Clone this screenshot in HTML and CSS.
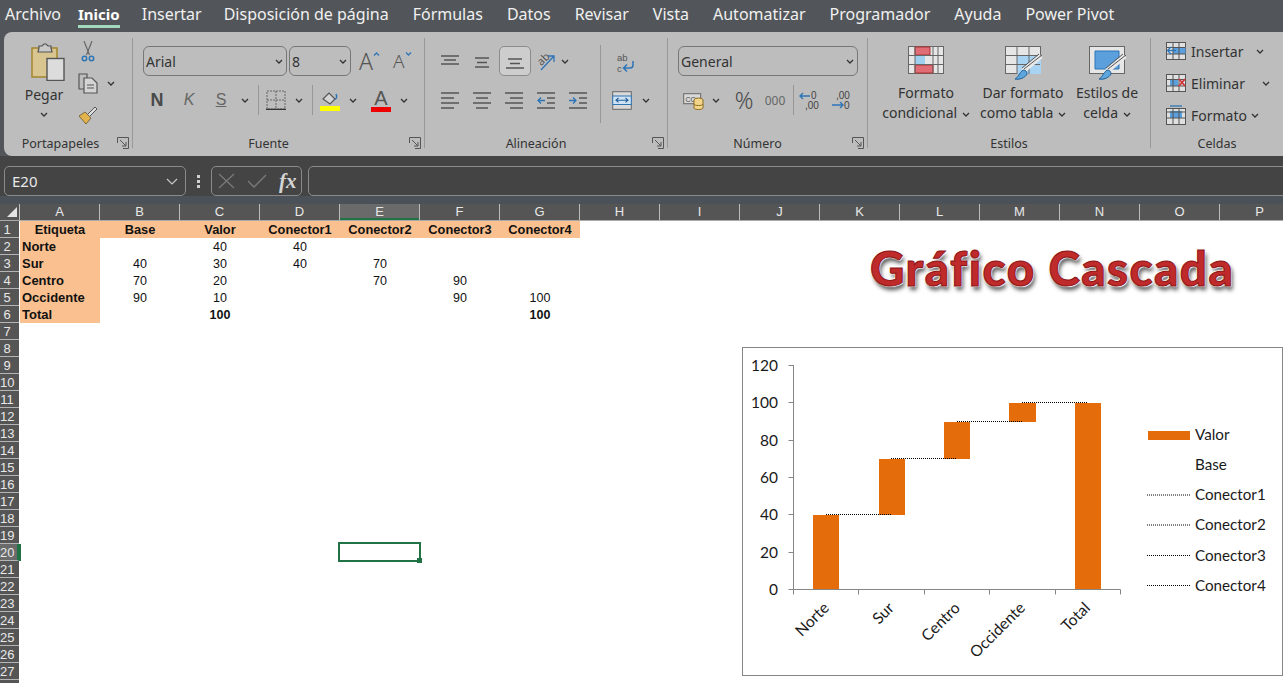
FILE: index.html
```html
<!DOCTYPE html>
<html lang="es">
<head>
    <meta charset="UTF-8">
    <title>Gráfico Cascada - Excel</title>
    <link rel="stylesheet" href="styles.css">
</head>
<body>
    <nav class="menu">
        <span>Archivo</span>
        <span class="active">Inicio</span>
        <span class="tight">Insertar</span>
        <span>Disposición de página</span>
        <span>Fórmulas</span>
        <span>Datos</span>
        <span>Revisar</span>
        <span>Vista</span>
        <span>Automatizar</span>
        <span>Programador</span>
        <span>Ayuda</span>
        <span>Power Pivot</span>
    </nav>

    <div class="ribbon">
        <!-- Portapapeles -->
        <section class="group g-clip">
            <div class="clip-body">
                <div class="paste">
                    <svg class="paste-ico" width="34" height="38" viewBox="0 0 34 38"><rect x="1" y="5" width="25" height="29" fill="#d8c58f" stroke="#a5852f" stroke-width="1.5"/><path d="M8 5V3h3l2-2h2l2 2h3v2l1 4H7z" fill="#c9c9c9" stroke="#555" stroke-width="1.2"/><rect x="16" y="15.500" width="17" height="22" fill="#dcdcdc" stroke="#555" stroke-width="1.4"/></svg>
                    <span class="paste-label">Pegar</span>
                    <svg class="chev" width="8" height="5" viewBox="0 0 8 5"><path d="M1 1l3 3 3-3"/></svg>
                </div>
                <div class="clip-tools">
                    <div class="clip-row clip-cut"><svg width="14" height="21" viewBox="0 0 14 21"><path d="M3 0l5.500 14M11 0L5.500 14" fill="none" stroke="#666" stroke-width="1.2"/><circle cx="3.500" cy="17.500" r="2.200" fill="none" stroke="#2e75b6" stroke-width="1.500"/><circle cx="10.500" cy="17.500" r="2.200" fill="none" stroke="#2e75b6" stroke-width="1.500"/></svg></div>
                    <div class="clip-row"><svg width="20" height="21" viewBox="0 0 20 21"><path d="M6 16H1V1h8v4" fill="none" stroke="#555" stroke-width="1.200"/><path d="M6 5h8l5 5v10H6z" fill="#d4d4d4" stroke="#555" stroke-width="1.200"/><path d="M9 12h7M9 15h7" stroke="#555"/></svg><svg class="chev chev-copy" width="8" height="5" viewBox="0 0 8 5"><path d="M1 1l3 3 3-3"/></svg></div>
                    <div class="clip-row"><svg width="20" height="20" viewBox="0 0 20 20"><path d="M1 11l6-4 6 6-5 6z" fill="#e2b34c" stroke="#7a6a3a"/><path d="M10 9l7-7 2 2-7 7" fill="#ddd" stroke="#555"/></svg></div>
                </div>
            </div>
            <footer class="group-label"><span class="label-clip">Portapapeles</span><svg class="launcher" width="12" height="12" viewBox="0 0 12 12"><path d="M.5 6V.5h11v11H6M3 3l6 6M9 5v4H5"/></svg></footer>
        </section>
        <div class="vsep"></div>

        <!-- Fuente -->
        <section class="group g-font">
            <div class="row row-top">
                <div class="combo combo-font"><span>Arial</span><svg class="chev" width="8" height="5" viewBox="0 0 8 5"><path d="M1 1l3 3 3-3"/></svg></div>
                <div class="combo combo-size"><span>8</span><svg class="chev" width="8" height="5" viewBox="0 0 8 5"><path d="M1 1l3 3 3-3"/></svg></div>
                <div class="font-size grow"><span>A</span><svg width="7" height="4" viewBox="0 0 7 4"><path d="M1 3.500l2.500-2.500 2.500 2.500" fill="none" stroke="#2e75b6" stroke-width="1.300"/></svg></div>
                <div class="font-size shrink"><span>A</span><svg width="7" height="4" viewBox="0 0 7 4"><path d="M1 .5l2.500 2.500 2.500-2.500" fill="none" stroke="#2e75b6" stroke-width="1.300"/></svg></div>
            </div>
            <div class="row row-low font-low">
                <span class="tool-t w32 t-bold">N</span>
                <span class="tool-t w32 t-ital">K</span>
                <span class="tool-t w32 t-under">S</span>
                <svg class="chev w16" width="8" height="5" viewBox="0 0 8 5"><path d="M1 1l3 3 3-3"/></svg>
                <i class="rsep rsep-a"></i>
                <span class="ico w26"><svg width="20" height="20" viewBox="0 0 20 20"><path d="M1 1h18v18H1zM10 1v18M1 10h18" fill="none" stroke="#666" stroke-dasharray="2 1"/><path d="M0 19.500h20" stroke="#333" stroke-width="1.500"/></svg></span>
                <svg class="chev w16 mgl2" width="8" height="5" viewBox="0 0 8 5"><path d="M1 1l3 3 3-3"/></svg>
                <i class="rsep rsep-b"></i>
                <span class="ico w24 color-btn"><svg width="20" height="21" viewBox="0 0 20 21"><path d="M3 9l6-6 6 6-5 5z" fill="#d5d5d5" stroke="#555" stroke-width="1.200"/><path d="M15 9c2 0 2-3 1-5" fill="none" stroke="#2e75b6" stroke-width="1.500"/><rect y="16" width="20" height="5" fill="#ffff00"/></svg></span>
                <svg class="chev w16 mgl3" width="8" height="5" viewBox="0 0 8 5"><path d="M1 1l3 3 3-3"/></svg>
                <span class="font-color w24 mgl8"><span>A</span><i></i></span>
                <svg class="chev w16 mgl3" width="8" height="5" viewBox="0 0 8 5"><path d="M1 1l3 3 3-3"/></svg>
            </div>
            <footer class="group-label"><span>Fuente</span><svg class="launcher" width="12" height="12" viewBox="0 0 12 12"><path d="M.5 6V.5h11v11H6M3 3l6 6M9 5v4H5"/></svg></footer>
        </section>
        <div class="vsep"></div>

        <!-- Alineación -->
        <section class="group g-align">
            <div class="align-body">
                <div class="align-left">
                    <div class="row row-top">
                        <span class="ico w32"><svg width="20" height="12" viewBox="0 0 20 12"><path d="M1 1h18M4 5h12M1 9h18" stroke="#555" stroke-width="1.300"/></svg></span>
                        <span class="ico w32 nudge"><svg width="20" height="12" viewBox="0 0 20 12"><path d="M3 1h14M5 5.500h10M3 10h14" stroke="#555" stroke-width="1.300"/></svg></span>
                        <span class="ico w32 selected"><svg width="20" height="12" viewBox="0 0 20 12"><path d="M3 2h14M5 6.500h10M1 11h18" stroke="#555" stroke-width="1.300"/></svg></span>
                        <span class="ico w24"><svg class="over" width="22" height="20" viewBox="0 0 22 20"><text x="3" y="13" class="ab-text" transform="rotate(-45 8 9)">ab</text><path d="M7 19L20 5M14 5h6v6" fill="none" stroke="#2e75b6" stroke-width="1.300"/></svg></span>
                        <svg class="chev w16" width="8" height="5" viewBox="0 0 8 5"><path d="M1 1l3 3 3-3"/></svg>
                    </div>
                    <div class="row row-low">
                        <span class="ico w32"><svg width="20" height="17" viewBox="0 0 20 17"><path d="M1 1h18M1 6h13M1 11h18M1 16h13" stroke="#555" stroke-width="1.300"/></svg></span>
                        <span class="ico w32"><svg width="20" height="17" viewBox="0 0 20 17"><path d="M1 1h18M4 6h12M1 11h18M4 16h12" stroke="#555" stroke-width="1.300"/></svg></span>
                        <span class="ico w32"><svg width="20" height="17" viewBox="0 0 20 17"><path d="M1 1h18M6 6h13M1 11h18M6 16h13" stroke="#555" stroke-width="1.300"/></svg></span>
                        <span class="ico w32"><svg width="20" height="17" viewBox="0 0 20 17"><path d="M1 1h18M11 6h8M11 11h8M1 16h18" stroke="#555" stroke-width="1.300"/><path d="M9 8.500H2M5 5.500l-3 3 3 3" fill="none" stroke="#2e75b6" stroke-width="1.300"/></svg></span>
                        <span class="ico w32"><svg width="20" height="17" viewBox="0 0 20 17"><path d="M1 1h18M11 6h8M11 11h8M1 16h18" stroke="#555" stroke-width="1.300"/><path d="M1 8.500h7M5 5.500l3 3-3 3" fill="none" stroke="#2e75b6" stroke-width="1.300"/></svg></span>
                    </div>
                </div>
                <i class="rsep rsep-tall"></i>
                <div class="align-right">
                    <span class="ico wrap-ico"><svg class="over" width="20" height="21" viewBox="0 0 20 21"><text x="1" y="8.500" class="wrap-text">ab</text><text x="1" y="19.500" class="wrap-text">c</text><path d="M17 9v4c0 2-1 3-3 3H8M11 12.500L7.500 16l3.500 3.500" fill="none" stroke="#2e75b6" stroke-width="1.500"/></svg></span>
                    <div class="row merge-row">
                        <span class="ico"><svg width="20" height="19" viewBox="0 0 20 19"><rect x=".7" y=".7" width="18.600" height="17.600" fill="#d9d9d9" stroke="#666"/><rect x=".7" y="5" width="18.600" height="8.500" fill="#cfe2f3" stroke="#2e75b6"/><path d="M4 9.200h12M6.500 7l-2.500 2.200 2.500 2.200M13.500 7l2.500 2.200-2.500 2.200" fill="none" stroke="#1f5f99" stroke-width="1.100"/></svg></span>
                        <svg class="chev merge-chev" width="8" height="5" viewBox="0 0 8 5"><path d="M1 1l3 3 3-3"/></svg>
                    </div>
                </div>
            </div>
            <footer class="group-label"><span>Alineación</span><svg class="launcher" width="12" height="12" viewBox="0 0 12 12"><path d="M.5 6V.5h11v11H6M3 3l6 6M9 5v4H5"/></svg></footer>
        </section>
        <div class="vsep"></div>

        <!-- Número -->
        <section class="group g-num">
            <div class="row row-top">
                <div class="combo combo-num"><span>General</span><svg class="chev" width="8" height="5" viewBox="0 0 8 5"><path d="M1 1l3 3 3-3"/></svg></div>
            </div>
            <div class="row row-low num-low">
                <span class="ico w26"><svg width="21" height="19" viewBox="0 0 21 19"><rect x=".7" y="2.700" width="17" height="10" fill="#d9d9d9" stroke="#666"/><text x="2.500" y="11" class="cur-text">CC</text><ellipse cx="15.500" cy="9" rx="4.500" ry="2" fill="#f3d58a" stroke="#8a6d1f"/><path d="M11 9v8c0 2 9 2 9 0V9M11 13c0 2 9 2 9 0" fill="#f3d58a" stroke="#8a6d1f"/></svg></span>
                <svg class="chev w16 mgl2" width="8" height="5" viewBox="0 0 8 5"><path d="M1 1l3 3 3-3"/></svg>
                <span class="percent">%</span>
                <span class="thousand">000</span>
                <i class="rsep rsep-c"></i>
                <span class="ico w32"><svg class="over" width="21" height="20" viewBox="0 0 21 20"><text x="12" y="9" class="dec-text">0</text><text x="6" y="19" class="dec-text">,00</text><path d="M1 6h10M4 3L1 6l3 3" fill="none" stroke="#2e75b6" stroke-width="1.400"/></svg></span>
                <span class="ico w32"><svg class="over" width="21" height="20" viewBox="0 0 21 20"><text x="5" y="9" class="dec-text">,00</text><text x="13" y="19" class="dec-text">0</text><path d="M1 15h11M9 12l3 3-3 3" fill="none" stroke="#2e75b6" stroke-width="1.400"/></svg></span>
            </div>
            <footer class="group-label"><span>Número</span><svg class="launcher" width="12" height="12" viewBox="0 0 12 12"><path d="M.5 6V.5h11v11H6M3 3l6 6M9 5v4H5"/></svg></footer>
        </section>
        <div class="vsep"></div>

        <!-- Estilos -->
        <section class="group g-styles">
            <div class="styles-body">
                <div class="style-btn sb-cond">
                    <svg width="36" height="28" viewBox="0 0 36 28"><rect x=".5" y=".5" width="35" height="27" fill="#e6e6e6" stroke="#666"/><path d="M7 1h15v8H7zM7 19h18v8H7z" fill="#e06c75" stroke="#a33"/><path d="M7 10h10v8H7z" fill="#9fd0f0"/><path d="M7 1v27M25 1v27M30 1v27M1 9.500h34M1 18.500h34" stroke="#666" fill="none"/></svg>
                    <div class="style-text">Formato<br>condicional <svg class="chev" width="8" height="5" viewBox="0 0 8 5"><path d="M1 1l3 3 3-3"/></svg></div>
                </div>
                <div class="style-btn sb-table">
                    <svg width="38" height="34" viewBox="0 0 38 34"><rect x=".5" y=".5" width="35" height="27" fill="#e6e6e6" stroke="#666"/><path d="M12 10h24v18H12z" fill="#a9d3f2"/><path d="M1 9.500h34M1 18.500h34M12 1v27M24 1v27" stroke="#666" fill="none"/><path d="M36 10L18 25" stroke="#e8e8e8" stroke-width="5"/><path d="M37 9L19 23M34 8L17 22" stroke="#555" fill="none"/><path d="M10 33c3-1 4-6 8-9 3 0 4 2 4 4-2 4-8 6-12 5z" fill="#5ca6dc" stroke="#1f5f99"/></svg>
                    <div class="style-text">Dar formato<br>como tabla <svg class="chev" width="8" height="5" viewBox="0 0 8 5"><path d="M1 1l3 3 3-3"/></svg></div>
                </div>
                <div class="style-btn sb-cell">
                    <svg width="38" height="34" viewBox="0 0 38 34"><rect x=".5" y=".5" width="35" height="27" fill="#e6e6e6" stroke="#666"/><path d="M6 5h24v18H6z" fill="#5b9fdc" stroke="#2e75b6"/><path d="M36 10L18 25" stroke="#e8e8e8" stroke-width="5"/><path d="M37 9L19 23M34 8L17 22" stroke="#555" fill="none"/><path d="M10 33c3-1 4-6 8-9 3 0 4 2 4 4-2 4-8 6-12 5z" fill="#5ca6dc" stroke="#1f5f99"/></svg>
                    <div class="style-text">Estilos de<br>celda <svg class="chev" width="8" height="5" viewBox="0 0 8 5"><path d="M1 1l3 3 3-3"/></svg></div>
                </div>
            </div>
            <footer class="group-label"><span>Estilos</span></footer>
        </section>
        <div class="vsep"></div>

        <!-- Celdas -->
        <section class="group g-cells">
            <div class="cells-body">
                <div class="cell-tool"><svg width="20" height="18" viewBox="0 0 20 18"><rect x=".5" y=".5" width="19" height="17" fill="#e0e0e0" stroke="#555"/><rect x="7" y="5" width="12.500" height="7" fill="#5b9fdc"/><path d="M7 1v16M13 1v16M1 5.500h18M1 12h18" stroke="#555" fill="none"/><path d="M10 8.500H1.500M5 5l-3.500 3.500L5 12" fill="#e8f0f8" stroke="#2e75b6" stroke-width="1.300"/></svg><span>Insertar</span><svg class="chev chev-ins" width="8" height="5" viewBox="0 0 8 5"><path d="M1 1l3 3 3-3"/></svg></div>
                <div class="cell-tool"><svg width="20" height="18" viewBox="0 0 20 18"><rect x=".5" y=".5" width="19" height="17" fill="#e0e0e0" stroke="#555"/><rect x="4" y="5" width="8" height="7" fill="#5b9fdc"/><path d="M7 1v16M13 1v16M1 5.500h18M1 12h18" stroke="#555" fill="none"/><path d="M13 5l6 7M19 5l-6 7" stroke="#d13438" stroke-width="1.800"/></svg><span>Eliminar</span><svg class="chev chev-del" width="8" height="5" viewBox="0 0 8 5"><path d="M1 1l3 3 3-3"/></svg></div>
                <div class="cell-tool"><svg width="20" height="20" viewBox="0 0 20 20"><rect x=".5" y="3.500" width="19" height="16" fill="#e0e0e0" stroke="#555"/><rect x="4" y="6" width="12" height="7" fill="#5b9fdc"/><path d="M7 4v15M13 4v15M1 7h18M1 13h18" stroke="#555" fill="none"/><path d="M4 1h12" stroke="#2e75b6" stroke-width="1.300"/></svg><span>Formato</span><svg class="chev chev-fmt" width="8" height="5" viewBox="0 0 8 5"><path d="M1 1l3 3 3-3"/></svg></div>
            </div>
            <footer class="group-label"><span>Celdas</span></footer>
        </section>
    </div>

    <div class="formula-bar">
        <div class="name-box"><span>E20</span><svg width="12" height="7" viewBox="0 0 12 7"><path d="M1 1l5 5 5-5" fill="none" stroke="#c8c8c8" stroke-width="1.200"/></svg></div>
        <div class="fb-grip"><i></i><i></i><i></i></div>
        <div class="fx-box">
            <svg width="17" height="16" viewBox="0 0 17 16"><path d="M1 1l15 14M16 1L1 15" stroke="#7a7a7a" stroke-width="1.300"/></svg>
            <svg width="20" height="14" viewBox="0 0 20 14"><path d="M1 7l6 6L19 1" fill="none" stroke="#7a7a7a" stroke-width="1.300"/></svg>
            <span class="fx">fx</span>
        </div>
        <div class="formula-input"></div>
    </div>

    <div class="sheet">
        <div class="col-heads">
            <div class="corner"><svg width="10" height="10" viewBox="0 0 10 10"><path d="M10 0v10H0z" fill="#e4e4e4"/></svg></div>
            <div class="col-head">A</div>
            <div class="col-head">B</div>
            <div class="col-head">C</div>
            <div class="col-head">D</div>
            <div class="col-head current">E</div>
            <div class="col-head">F</div>
            <div class="col-head">G</div>
            <div class="col-head">H</div>
            <div class="col-head">I</div>
            <div class="col-head">J</div>
            <div class="col-head">K</div>
            <div class="col-head">L</div>
            <div class="col-head">M</div>
            <div class="col-head">N</div>
            <div class="col-head">O</div>
            <div class="col-head">P</div>
        </div>
        <div class="sheet-body">
            <div class="row-heads">
                <div>1</div><div>2</div><div>3</div><div>4</div><div>5</div><div>6</div><div>7</div>
                <div>8</div><div>9</div><div>10</div><div>11</div><div>12</div><div>13</div><div>14</div>
                <div>15</div><div>16</div><div>17</div><div>18</div><div>19</div><div class="current">20</div><div>21</div>
                <div>22</div><div>23</div><div>24</div><div>25</div><div>26</div><div>27</div><div></div>
            </div>
            <div class="cells">
                <div class="c hd">Etiqueta</div><div class="c hd">Base</div><div class="c hd">Valor</div><div class="c hd">Conector1</div><div class="c hd">Conector2</div><div class="c hd">Conector3</div><div class="c hd">Conector4</div>
                <div class="c lb">Norte</div><div class="c"></div><div class="c">40</div><div class="c">40</div><div class="c"></div><div class="c"></div><div class="c"></div>
                <div class="c lb">Sur</div><div class="c">40</div><div class="c">30</div><div class="c">40</div><div class="c">70</div><div class="c"></div><div class="c"></div>
                <div class="c lb">Centro</div><div class="c">70</div><div class="c">20</div><div class="c"></div><div class="c">70</div><div class="c">90</div><div class="c"></div>
                <div class="c lb">Occidente</div><div class="c">90</div><div class="c">10</div><div class="c"></div><div class="c"></div><div class="c">90</div><div class="c">100</div>
                <div class="c lb">Total</div><div class="c"></div><div class="c b">100</div><div class="c"></div><div class="c"></div><div class="c"></div><div class="c b">100</div>
            </div>
        </div>

        <div class="sel-cell"><i></i></div>
        <div class="sheet-title">Gráfico Cascada</div>

        <svg class="chart" width="541" height="329" viewBox="742 347 541 329">
            <rect x="742.500" y="347.500" width="540" height="328" fill="#fff" stroke="#868686"/>
            <!-- ejes -->
            <path class="axis" d="M793.500 365v224.500M788.500 365.500h5M788.500 402.500h5M788.500 440.500h5M788.500 477.500h5M788.500 514.500h5M788.500 552.500h5M788.500 589.500h332M793.500 589.500v5M858.500 589.500v5M924.500 589.500v5M989.500 589.500v5M1055.500 589.500v5M1120.500 589.500v5"/>
            <g class="ylab">
                <text x="778" y="371">120</text>
                <text x="778" y="408">100</text>
                <text x="778" y="446">80</text>
                <text x="778" y="483">60</text>
                <text x="778" y="520">40</text>
                <text x="778" y="558">20</text>
                <text x="778" y="595">0</text>
            </g>
            <!-- barras -->
            <g fill="#e46c0a">
                <rect x="813" y="515" width="26" height="74"/>
                <rect x="879" y="459" width="26" height="56"/>
                <rect x="944" y="422" width="26" height="37"/>
                <rect x="1009" y="403" width="27" height="19"/>
                <rect x="1075" y="403" width="26" height="186"/>
            </g>
            <!-- conectores -->
            <path class="conn" d="M826 514.500h66M891 458.500h66M957 421.500h66M1022 402.500h66"/>
            <g class="xlab">
                <text transform="translate(830 609) rotate(-45)">Norte</text>
                <text transform="translate(895 609) rotate(-45)">Sur</text>
                <text transform="translate(961 609) rotate(-45)">Centro</text>
                <text transform="translate(1026 609) rotate(-45)">Occidente</text>
                <text transform="translate(1091 609) rotate(-45)">Total</text>
            </g>
            <!-- leyenda -->
            <rect x="1148" y="431" width="42" height="9" fill="#e46c0a"/>
            <path class="conn" d="M1147 495h43M1147 525h43M1147 555.500h43M1147 585.500h43"/>
            <g class="leg">
                <text x="1195" y="440">Valor</text>
                <text x="1195" y="470">Base</text>
                <text x="1195" y="500">Conector1</text>
                <text x="1195" y="530">Conector2</text>
                <text x="1195" y="561">Conector3</text>
                <text x="1195" y="591">Conector4</text>
            </g>
        </svg>
    </div>
</body>
</html>
```

FILE: styles.css
```css
html, body {
    margin: 0;
    padding: 0;
    height: 683px;
    overflow: hidden;
}
body {
    background: #52565a;
    font-family: "Noto Sans", "Open Sans", sans-serif;
    color: #333;
    position: relative;
}
svg {
    display: block;
    flex: none;
}
svg.over {
    overflow: visible;
}

/* menu */
.menu {
    height: 32px;
    display: flex;
    gap: 24px;
    padding-left: 5px;
    color: #f0f0f0;
    font-size: 16px;
    line-height: 28px;
    white-space: nowrap;
}
.menu .active {
    font-weight: 700;
    font-size: 15px;
    height: 28px;
    margin: 0 -2px 0 -7px;
    color: #fff;
    box-shadow: inset 0 -3px 0 #a3d9bd;
}
.menu .tight {
    margin-right: -2px;
}

/* ribbon */
.ribbon {
    height: 124px;
    margin-left: 4px;
    display: flex;
    background: #bdbdbd;
    border-radius: 8px 0 0 8px;
    font-size: 14px;
    white-space: nowrap;
}
.vsep {
    width: 1px;
    margin: 6px 0 8px;
    background: #989898;
    flex: none;
}
.group {
    height: 124px;
    display: flex;
    flex-direction: column;
    flex: none;
    position: relative;
}
.g-clip { width: 128px; }
.g-font { width: 291px; }
.g-align { width: 242px; }
.g-num { width: 199px; }
.g-styles { width: 282px; }
.g-cells { flex: 1; }
.group-label {
    margin-top: auto;
    height: 24px;
    display: flex;
    align-items: center;
    font-size: 12.5px;
    padding-bottom: 2px;
    box-sizing: border-box;
}
.group-label span {
    flex: 1;
    text-align: center;
}
.group-label .label-clip { padding-left: 5px; }
.launcher {
    fill: none;
    stroke: #555;
    margin-right: 3px;
    margin-left: 5px;
}
.chev {
    fill: none;
    stroke: #333;
    stroke-width: 1.300;
}
.row {
    display: flex;
    align-items: center;
    height: 30px;
}
.row-top { margin-top: 14px; }
.row-low { margin-top: 9px; }
.ico, .tool-t, .font-color {
    display: flex;
    align-items: center;
    justify-content: center;
    flex: none;
}
.w16 { width: 16px; padding: 0 4px; box-sizing: border-box; }
.w24 { width: 24px; }
.w26 { width: 26px; }
.w32 { width: 32px; }
.mgl2 { margin-left: 2px; }
.mgl3 { margin-left: 3px; }
.mgl8 { margin-left: 8px; }
.rsep {
    width: 1px;
    height: 30px;
    background: #989898;
    flex: none;
}
.rsep-a { margin: 0 4px 0 5px; }
.rsep-b { margin: 0 5px 0 5px; }
.rsep-c { margin: 0 -1px 0 3px; }

/* combos */
.combo {
    height: 30px;
    box-sizing: border-box;
    border: 1px solid #777;
    border-radius: 6px;
    display: flex;
    align-items: center;
    justify-content: space-between;
    padding: 0 3px 0 2px;
    font-size: 14px;
    flex: none;
}
.combo-font { width: 144px; margin-left: 10px; }
.combo-size { width: 62px; margin-left: 2px; }
.combo-num { width: 180px; margin-left: 10px; }

/* portapapeles */
.clip-body { display: flex; }
.paste {
    width: 56px;
    margin-left: 12px;
    padding-top: 11px;
    display: flex;
    flex-direction: column;
    align-items: center;
}
.paste-ico { margin-left: 8px; }
.paste-label { margin-top: 4px; line-height: 20px; }
.paste .chev { margin-top: 7px; }
.clip-tools { padding-top: 3px; margin-left: 6px; }
.clip-row {
    height: 32px;
    display: flex;
    align-items: center;
    position: relative;
}
.clip-cut { padding-left: 3px; }
.chev-copy { margin-left: 9px; }

/* fuente */
.font-size {
    display: flex;
    color: #555;
    font-size: 23px;
    line-height: 30px;
    font-weight: 300;
}
.font-size svg { margin: 6px 0 0 0; }
.grow { margin-left: 8px; width: 26px; }
.shrink { margin-left: 8px; font-size: 19px; }
.font-low { padding-left: 8px; }
.tool-t { font-family: "Liberation Sans", sans-serif; font-size: 17px; color: #4a4a4a; }
.t-bold { font-weight: 700; font-size: 18px; }
.t-ital { font-style: italic; font-size: 16px; color: #666; }
.t-under { text-decoration: underline; font-size: 16px; color: #666; }
.font-color {
    flex-direction: column;
    font-family: "Liberation Sans", sans-serif;
    font-size: 20px;
    line-height: 18px;
    color: #555;
}
.font-color i {
    display: block;
    width: 20px;
    height: 5px;
    background: #ee0000;
}

/* alineacion */
.align-body { display: flex; padding-left: 9px; }
.align-left .w32 { width: 32px; }
.nudge svg { margin-top: 3px; }
.selected {
    height: 30px;
    box-sizing: border-box;
    border: 1px solid #8c8c8c;
    border-radius: 5px;
    background: #cdcdcd;
    margin-right: 6px;
    padding-top: 4px;
    width: 30px;
    margin-left: 1px;
}
.align-left .row-top .w24 { margin-left: -4px; }
.rsep-tall { height: 78px; margin: 13px 9px 0 6px; }
.align-right { display: flex; flex-direction: column; }
.wrap-ico { margin: 20px 0 0 6px; width: 20px; }
.merge-row { margin-top: 12px; margin-left: 2px; }
.merge-chev { margin-left: 10px; }
.ab-text {
    font-family: "Noto Sans", sans-serif;
    font-size: 11px;
    fill: #555;
}
.wrap-text {
    font-family: "Liberation Sans", sans-serif;
    font-size: 9.5px;
    fill: #555;
}
.cur-text {
    font-family: "Liberation Sans", sans-serif;
    font-size: 7px;
    fill: #444;
}
.dec-text {
    font-family: "Liberation Sans", sans-serif;
    font-size: 10px;
    fill: #444;
}

/* numero */
.num-low { padding-left: 12px; }
.percent {
    font-size: 23px;
    line-height: 30px;
    color: #4a4a4a;
    width: 32px;
    text-align: center;
    margin-left: 4px;
    font-weight: 300;
}
.thousand {
    font-size: 12px;
    color: #666;
    width: 30px;
    text-align: center;
}

/* estilos */
.styles-body { display: flex; padding: 14px 0 0 10px; }
.style-btn {
    display: flex;
    flex-direction: column;
    align-items: center;
    height: 84px;
}
.sb-cond { width: 96px; }
.sb-table { width: 98px; }
.sb-cell { width: 70px; }
.sb-cond svg:first-child { margin-bottom: 9px; }
.sb-table > svg:first-child, .sb-cell > svg:first-child { margin-bottom: 3px; margin-left: 2px; }
.style-text {
    line-height: 20px;
    text-align: center;
}
.style-text .chev { display: inline-block; vertical-align: middle; margin-left: 1px; }

/* celdas */
.cells-body { padding: 3px 0 0 15px; }
.cell-tool {
    height: 32px;
    display: flex;
    align-items: center;
}
.cell-tool span { margin-left: 5px; }
.chev-ins { margin-left: 13px; }
.chev-del { margin-left: 17px; }
.chev-fmt { margin-left: 4px; }

/* barra de formulas */
.formula-bar {
    height: 48px;
    background: linear-gradient(#444 0, #444 40px, #4b5158 40px);
    display: flex;
    padding: 10px 0 8px 4px;
    box-sizing: border-box;
    color: #e8e8e8;
    overflow: hidden;
}
.name-box, .fx-box, .formula-input {
    height: 30px;
    box-sizing: border-box;
    border: 1px solid #8a8a8a;
    border-radius: 5px;
    display: flex;
    align-items: center;
    flex: none;
}
.name-box {
    width: 182px;
    justify-content: space-between;
    padding: 0 7px 0 7px;
    font-size: 15px;
}
.fb-grip {
    width: 25px;
    display: flex;
    flex-direction: column;
    align-items: center;
    justify-content: center;
    gap: 2px;
    flex: none;
}
.fb-grip i {
    width: 3px;
    height: 3px;
    background: #d0d0d0;
}
.fx-box {
    width: 91px;
    padding-left: 6px;
    gap: 12px;
}
.fx {
    font-family: "Liberation Serif", serif;
    font-style: italic;
    font-weight: 700;
    font-size: 21px;
    color: #d4d4d4;
    line-height: 26px;
}
.formula-input {
    width: 990px;
    margin-left: 6px;
}

/* hoja */
.sheet {
    position: absolute;
    left: 0;
    top: 0;
    width: 1283px;
    height: 683px;
    padding-top: 204px;
    box-sizing: border-box;
    overflow: hidden;
    font-family: "Liberation Sans", sans-serif;
}
.col-heads {
    height: 17px;
    box-sizing: border-box;
    display: flex;
    background: #555;
    border-bottom: 1px solid #aaa;
    color: #e8e8e8;
    font-size: 13px;
}
.corner {
    width: 20px;
    box-sizing: border-box;
    padding: 3px 0 0 7px;
    border-right: 1px solid #bbb;
    flex: none;
}
.col-head {
    width: 80px;
    box-sizing: border-box;
    flex: none;
    text-align: center;
    border-right: 1px solid #bbb;
    line-height: 16px;
}
.col-head.current {
    background: #6a6a6a;
    box-shadow: inset 0 -2px 0 #217346;
}
.sheet-body {
    display: flex;
    background: #fff;
    height: 462px;
}
.row-heads {
    width: 19px;
    flex: none;
    background: #555;
    color: #e8e8e8;
    font-size: 13px;
    margin-right: 1px;
}
.row-heads div {
    height: 17px;
    box-sizing: border-box;
    border-bottom: 1px solid #b5b5b5;
    line-height: 17px;
    text-align: center;
    padding-right: 5px;
}
.row-heads .current {
    background: #6a6a6a;
    box-shadow: 2px 0 0 #217346;
    border-right: 2px solid #217346;
}
.cells {
    display: grid;
    grid-template-columns: repeat(7, 80px);
    grid-auto-rows: 17px;
    font-size: 12.5px;
    line-height: 18px;
    color: #111;
    text-align: center;
}
.hd, .lb {
    background: #fac090;
    font-weight: 700;
    font-size: 12.8px;
}
.lb {
    text-align: left;
    padding-left: 2px;
    font-size: 13px;
}
.b { font-weight: 700; }

.sel-cell {
    position: absolute;
    left: 338px;
    top: 542px;
    width: 83px;
    height: 20px;
    box-sizing: border-box;
    border: 2px solid #217346;
}
.sel-cell i {
    position: absolute;
    right: -3px;
    bottom: -3px;
    width: 5px;
    height: 5px;
    background: #217346;
}
.sheet-title {
    position: absolute;
    left: 870px;
    top: 236px;
    font-family: Lato, sans-serif;
    font-weight: 900;
    font-size: 47.5px;
    line-height: 64px;
    white-space: nowrap;
    letter-spacing: 1.500px;
    color: #bf2a2b;
    -webkit-text-stroke: 1px #8e1516;
    text-shadow: 0 0 2px #fff, 1px 1px 1px #fff, -1px -1px 1px #fff, 2px 4px 4px #555;
}
.chart {
    position: absolute;
    left: 742px;
    top: 347px;
}
.axis {
    fill: none;
    stroke: #868686;
}
.conn {
    fill: none;
    stroke: #000;
    stroke-dasharray: 1 1;
}
.chart text {
    font-family: Lato, sans-serif;
    font-size: 15.2px;
    fill: #1a1a1a;
}
.ylab text { text-anchor: end; font-size: 15.5px; }
.xlab text { text-anchor: end; font-size: 15.6px; }
```
